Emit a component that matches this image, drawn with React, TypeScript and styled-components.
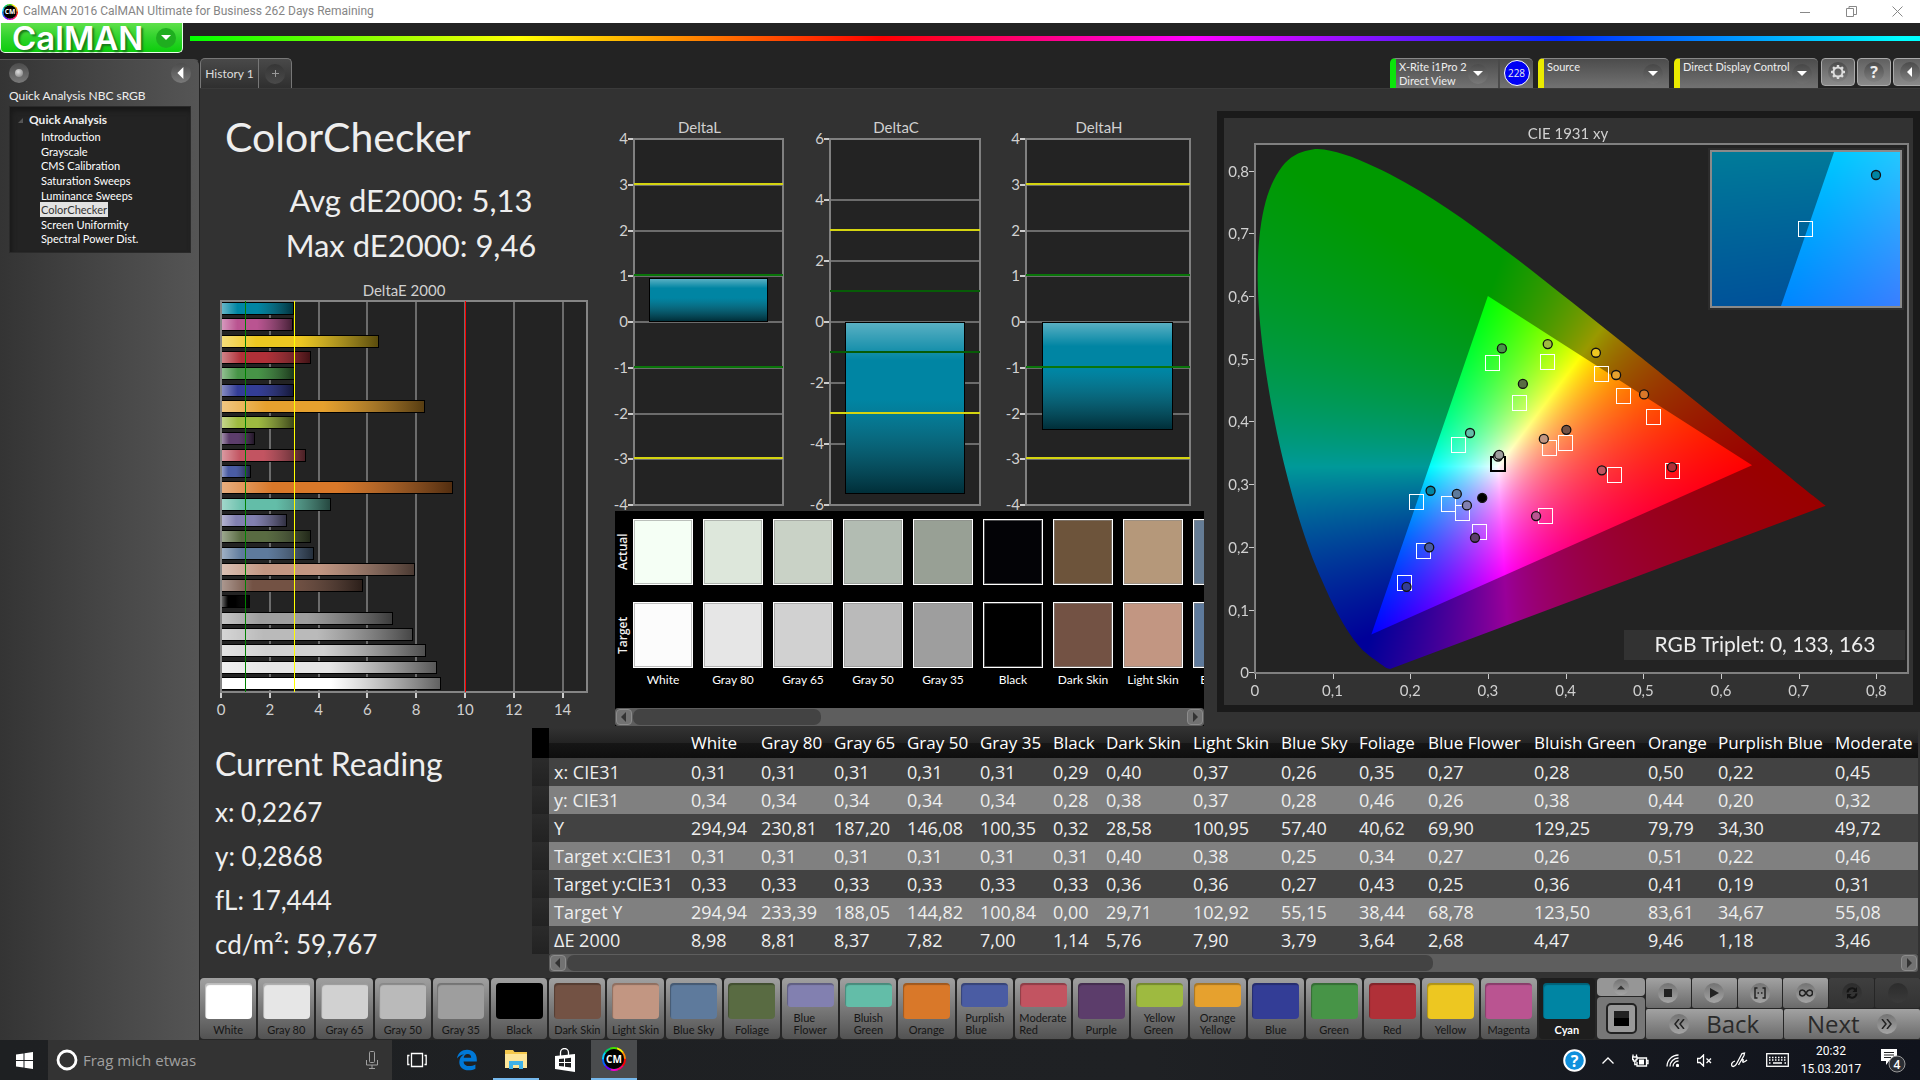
import React, { useEffect, useRef } from "react";
import styled, { createGlobalStyle } from "styled-components";

const humanist = `Lato, "Open Sans", sans-serif`;
const segoe = `"Open Sans", "Noto Sans", sans-serif`;
const compact = `Roboto, "Open Sans", sans-serif`;

const GlobalStyle = createGlobalStyle`
  * { box-sizing: border-box; }
  body { margin: 0; background: #232323; color: #eee; font-family: ${humanist}; overflow: hidden; }
  button, input, select { font: inherit; color: inherit; margin: 0; }
  button { padding: 0; border: 0; background: none; cursor: pointer; }
  ul { list-style: none; margin: 0; padding: 0; }
  h1, h2, h3, p { margin: 0; font-weight: 400; }
  a { color: inherit; text-decoration: none; }
`;

/* ---------- data ---------- */

type Patch = { name: string; color: string; actual?: string; de: number; lines?: [string, string] };

const patches: Patch[] = [
  { name: "White", color: "#ffffff", actual: "#f5fff5", de: 8.98 },
  { name: "Gray 80", color: "#e6e6e6", actual: "#dde7db", de: 8.81 },
  { name: "Gray 65", color: "#d1d1d1", actual: "#c9d2c6", de: 8.37 },
  { name: "Gray 50", color: "#bababa", actual: "#b2bcb2", de: 7.82 },
  { name: "Gray 35", color: "#9e9e9e", actual: "#98a095", de: 7.0 },
  { name: "Black", color: "#000000", actual: "#030306", de: 1.14 },
  { name: "Dark Skin", color: "#735244", actual: "#6d543b", de: 5.76 },
  { name: "Light Skin", color: "#c29682", actual: "#b5987a", de: 7.9 },
  { name: "Blue Sky", color: "#5e7a9c", actual: "#657c95", de: 3.79 },
  { name: "Foliage", color: "#596b42", de: 3.64 },
  { name: "Blue Flower", color: "#8280b0", de: 2.68, lines: ["Blue", "Flower"] },
  { name: "Bluish Green", color: "#63bda8", de: 4.47, lines: ["Bluish", "Green"] },
  { name: "Orange", color: "#d97829", de: 9.46 },
  { name: "Purplish Blue", color: "#4a5ca3", de: 1.18, lines: ["Purplish", "Blue"] },
  { name: "Moderate Red", color: "#c25461", de: 3.46, lines: ["Moderate", "Red"] },
  { name: "Purple", color: "#5c3d6b", de: 1.35 },
  { name: "Yellow Green", color: "#9eba40", de: 2.98, lines: ["Yellow", "Green"] },
  { name: "Orange Yellow", color: "#e6a12e", de: 8.3, lines: ["Orange", "Yellow"] },
  { name: "Blue", color: "#333d96", de: 2.95 },
  { name: "Green", color: "#479447", de: 3.0 },
  { name: "Red", color: "#b03038", de: 3.63 },
  { name: "Yellow", color: "#edc721", de: 6.45 },
  { name: "Magenta", color: "#ba5491", de: 2.9 },
  { name: "Cyan", color: "#0085a3", de: 2.94 },
];

const treeItems = ["Introduction", "Grayscale", "CMS Calibration", "Saturation Sweeps", "Luminance Sweeps", "ColorChecker", "Screen Uniformity", "Spectral Power Dist."];

const columns: [string, number][] = [
  ["White", 70], ["Gray 80", 73], ["Gray 65", 73], ["Gray 50", 73], ["Gray 35", 73], ["Black", 53],
  ["Dark Skin", 87], ["Light Skin", 88], ["Blue Sky", 78], ["Foliage", 69], ["Blue Flower", 106],
  ["Bluish Green", 114], ["Orange", 70], ["Purplish Blue", 117], ["Moderate Red", 140],
];

const tableRows: [string, string][] = [
  ["x: CIE31", "0,31 0,31 0,31 0,31 0,31 0,29 0,40 0,37 0,26 0,35 0,27 0,28 0,50 0,22 0,45"],
  ["y: CIE31", "0,34 0,34 0,34 0,34 0,34 0,28 0,38 0,37 0,28 0,46 0,26 0,38 0,44 0,20 0,32"],
  ["Y", "294,94 230,81 187,20 146,08 100,35 0,32 28,58 100,95 57,40 40,62 69,90 129,25 79,79 34,30 49,72"],
  ["Target x:CIE31", "0,31 0,31 0,31 0,31 0,31 0,31 0,40 0,38 0,25 0,34 0,27 0,26 0,51 0,22 0,46"],
  ["Target y:CIE31", "0,33 0,33 0,33 0,33 0,33 0,33 0,36 0,36 0,27 0,43 0,25 0,36 0,41 0,19 0,31"],
  ["Target Y", "294,94 233,39 188,05 144,82 100,84 0,00 29,71 102,92 55,15 38,44 68,78 123,50 83,61 34,67 55,08"],
  ["ΔE 2000", "8,98 8,81 8,37 7,82 7,00 1,14 5,76 7,90 3,79 3,64 2,68 4,47 9,46 1,18 3,46"],
];

/* ---------- shell ---------- */

const Window = styled.div`
  min-height: 100vh;
  display: flex;
  flex-direction: column;
  background: #232323;
`;

const TitleBar = styled.div`
  height: 23px;
  background: #fff;
  color: #858585;
  display: flex;
  align-items: center;
  gap: 5px;
  padding-left: 2px;
  font: 12px/23px ${compact};
  flex: none;
`;

const WindowButtons = styled.div`
  margin-left: auto;
  display: flex;
  button { width: 46px; height: 22px; display: grid; place-items: center; }
`;

const BrandRow = styled.header`
  display: flex;
  height: 35px;
  flex: none;
`;

const Brand = styled.button`
  width: 183px;
  height: 30px;
  border: 1px solid #e8ffe8;
  border-top: 0;
  border-radius: 0 0 5px 5px;
  background: linear-gradient(#5fe04a, #2fd32b 50%, #0ccd0c);
  display: flex;
  align-items: center;
  justify-content: space-between;
  padding: 0 6px 0 11px;
  font: 600 33px/28px Inter, ${segoe};
  color: #fff;
  text-shadow: 2px 2px 2px #1a7a1a;
`;

const BrandCaret = styled.span`
  width: 20px;
  height: 20px;
  border-radius: 50%;
  background: #1fae1f;
  display: grid;
  place-items: center;
`;

const Rainbow = styled.div`
  flex: 1;
  height: 5px;
  margin: 13px 0 0 7px;
  background: linear-gradient(90deg, #0f0, #ff0 19%, #f00 40%, #f0f 58%, #0026ff 79%, #0ff 99%);
`;

const Body = styled.div`
  flex: 1;
  display: grid;
  grid-template-columns: 200px minmax(0, 1fr);
`;

const Side = styled.aside`
  margin-top: 1px;
  background: linear-gradient(90deg, #343434, #454545 50%, #555);
  border-top: 1px solid #555;
  border-radius: 0 6px 0 0;
  border-right: 1px solid #232323;
  padding: 3px 8px 0 9px;
`;

const SideTop = styled.div`
  display: flex;
  justify-content: space-between;
`;

const Knob = styled.button<{ $dark?: boolean }>`
  width: 20px;
  height: 20px;
  border-radius: 50%;
  display: grid;
  place-items: center;
  flex: none;
  background: ${(p) => (p.$dark ? "linear-gradient(#363636, #4a4a4a)" : "linear-gradient(#4c4c4c, #797979)")};
`;

const Ball = styled.i`
  width: 8px;
  height: 8px;
  border-radius: 50%;
  background: radial-gradient(circle at 40% 35%, #ddd, #777);
`;

const SideTitle = styled.h2`
  font-size: 12px;
  line-height: 16px;
  padding-top: 5px;
  margin-bottom: 2px;
  white-space: nowrap;
`;

const Tree = styled.nav`
  background: #232323;
  border: 1px solid #2a2a2a;
  box-shadow: inset 2px 4px 5px #191919;
  height: 147px;
  padding: 4px 8px;
`;

const TreeHead = styled.div`
  display: flex;
  align-items: center;
  gap: 6px;
  font: 700 12px/18px ${humanist};
`;

const TreeList = styled.ul`
  display: grid;
  height: 117px;
  grid-template-rows: repeat(8, minmax(0, 1fr));
  padding-left: 22px;
  font-size: 11px;
`;

const TreeLink = styled.a<{ $on: boolean }>`
  display: flex;
  align-items: center;
  width: fit-content;
  height: 15px;
  padding: 0 1px;
  background: ${(p) => (p.$on ? "#e2e2e2" : "none")};
  color: ${(p) => (p.$on ? "#333" : "#fff")};
`;

const Work = styled.section`
  display: flex;
  flex-direction: column;
  min-width: 0;
`;

/* ---------- tab row ---------- */

const Tabs = styled.div`
  height: 30px;
  display: flex;
  align-items: stretch;
  overflow: hidden;
  flex: none;
`;

const TabGroup = styled.div`
  display: flex;
  border: 1px solid #777;
  border-bottom: 0;
  border-radius: 5px 5px 0 0;
  background: linear-gradient(#494949, #2f2f2f);
`;

const Tab = styled.button`
  width: 58px;
  border-right: 1px solid #777;
  font-size: 12px;
  color: #ddd;
`;

const AddTab = styled.button`
  width: 32px;
  display: grid;
  place-items: center;
`;

const Devices = styled.div`
  margin-left: auto;
  margin-right: -7px;
  display: flex;
  gap: 5px;
  flex: none;
`;

const Device = styled.div<{ $accent: string; $w: number }>`
  position: relative;
  width: ${(p) => p.$w}px;
  display: flex;
  border-radius: 5px 5px 0 0;
  border-top: 1px solid #888;
  border-left: 6px solid ${(p) => p.$accent};
  background: linear-gradient(#4c4c4c, #727272);
  font-size: 11px;
  line-height: 14px;
`;

const MeterButton = styled.button`
  width: 104px;
  border-right: 2px solid #4a4a4a;
  display: flex;
  align-items: center;
  justify-content: space-between;
  padding: 0 10px 0 3px;
  text-align: left;
  white-space: nowrap;
`;

const Count = styled.span`
  width: 26px;
  height: 26px;
  margin: 1px auto 0;
  border-radius: 50%;
  border: 1px solid #fff;
  background: #0000f5;
  display: grid;
  place-items: center;
  font: 10px/10px ${segoe};
`;

const DeviceSelect = styled.select`
  appearance: none;
  width: 100%;
  height: 28px;
  border: 0;
  background: none;
  padding: 1px 26px 13px 3px;
  font-size: 11px;
  line-height: 14px;
`;

const SelectCaret = styled.span`
  position: absolute;
  right: 6px;
  top: 5px;
  width: 20px;
  height: 20px;
  border-radius: 50%;
  background: linear-gradient(#474747, #707070);
  display: grid;
  place-items: center;
  pointer-events: none;
`;

const Tools = styled.div`
  display: flex;
  gap: 2px;
  margin-left: -2px;
`;

const Tool = styled.button`
  width: 34px;
  height: 28px;
  border: 1px solid #aaa;
  border-radius: 4px;
  background: linear-gradient(#606060, #8b8b8b);
  display: grid;
  place-items: center;
`;

const ToolFace = styled.span`
  width: 20px;
  height: 20px;
  border-radius: 50%;
  background: linear-gradient(#4b4b4b, #808080);
  display: grid;
  place-items: center;
  font: 700 16px/18px ${segoe};
`;

/* ---------- dashboard ---------- */

const Stage = styled.main`
  flex: 1;
  background: #323232;
  border-top: 1px solid #3a3a3a;
  display: flex;
  flex-direction: column;
`;

const Upper = styled.div`
  display: grid;
  grid-template-columns: 390fr 620fr 710fr;
  height: 639px;
`;

const Summary = styled.div`
  display: flex;
  flex-direction: column;
  min-width: 0;
`;

const Heading = styled.h1`
  padding: 20px 0 0 25px;
  font-size: 41px;
  line-height: 56px;
  color: #eee;
`;

const Averages = styled.div`
  padding: 13px 0 8px 32px;
  text-align: center;
  font-size: 31px;
  line-height: 45px;
`;

const Chart = styled.svg`
  display: block;
  width: 100%;
  height: auto;
  overflow: visible;
  font-family: ${humanist};
  font-size: 15px;
  fill: #d0d0d0;
  path, rect { shape-rendering: crispEdges; }
`;

const Center = styled.div`
  min-width: 0;
`;

const Compare = styled.div`
  margin: 0 6px 0 25px;
  background: #000;
`;

const CompareView = styled.div`
  display: grid;
  grid-template-columns: 18px minmax(0, 1fr);
  height: 197px;
  padding-top: 8px;
  overflow: hidden;
`;

const RowNames = styled.div`
  display: grid;
  grid-template-rows: 66px 66px;
  row-gap: 17px;
  align-content: start;
  font: 600 12px/16px ${segoe};
  span { writing-mode: vertical-rl; transform: rotate(180deg); text-align: center; }
`;

const CompareStrip = styled.div`
  display: flex;
  gap: 10px;
  overflow: hidden;
`;

const Pair = styled.figure`
  margin: 0;
  width: 60px;
  flex: none;
  display: grid;
  grid-template-rows: 66px 66px 24px;
  row-gap: 17px;
  figcaption { margin-top: -13px; text-align: center; font-size: 12px; line-height: 16px; white-space: nowrap; color: #fff; }
`;

const Swatch = styled.span<{ $c: string }>`
  background: ${(p) => p.$c};
  border: 1px solid #fff;
  box-shadow: inset 0 0 0 1px #8888;
`;

const ScrollBar = styled.div`
  height: 18px;
  display: grid;
  grid-template-columns: 18px minmax(0, 1fr) 18px;
  background: #5e5e5e;
  border-radius: 3px;
`;

const ScrollArrow = styled.button`
  margin: 1px;
  border: 1px solid #8c8c8c;
  border-radius: 4px;
  background: #727272;
  display: grid;
  place-items: center;
`;

const Thumb = styled.div<{ $share: number }>`
  width: ${(p) => p.$share}%;
  margin: 1px 0;
  border-radius: 7px;
  background: #434343;
`;

const CiePanel = styled.div`
  margin: 22px 0 0 7px;
  border: 7px solid #1a1a1a;
  align-self: start;
  background: #323232;
`;

const CieStack = styled.div`
  position: relative;
  canvas { display: block; width: 100%; height: auto; }
  svg { position: absolute; inset: 0; height: 100%; }
`;

/* ---------- readings and table ---------- */

const Lower = styled.div`
  display: grid;
  grid-template-columns: 332px minmax(0, 1fr);
  height: 250px;
`;

const Reading = styled.div`
  padding: 12px 0 0 15px;
  white-space: nowrap;
  h2 { font-size: 32px; line-height: 48px; margin-bottom: 2px; }
  p { font-size: 26px; line-height: 44px; }
`;

const TableArea = styled.div`
  margin-right: 2px;
  min-width: 0;
`;

const TableClip = styled.div`
  overflow: hidden;
`;

const Table = styled.table`
  width: 1438px;
  table-layout: fixed;
  border-collapse: collapse;
  font: 18px/28px ${segoe};
  white-space: nowrap;
  th, td { padding: 0 0 0 5px; text-align: left; font-weight: 400; height: 28px; }
  thead th { height: 30px; font-size: 17px; color: #fff; background: linear-gradient(#323232, #232323 50%, #161616 50%, #0e0e0e); }
  thead th:first-child { background: #000; }
  tbody tr { background: #424242; }
  tbody tr:nth-child(even) { background: #808080; }
  tbody td:first-child { background: linear-gradient(#2b2b2b, #222); }
`;

const TableScroll = styled.div`
  margin-left: 17px;
`;

/* ---------- patch strip ---------- */

const Strip = styled.div`
  display: grid;
  grid-template-columns: minmax(0, 1fr) 325px;
  height: 62px;
  background: #262626;
  padding-bottom: 1px;
`;

const PatchRow = styled.div`
  display: grid;
  grid-template-columns: repeat(24, minmax(0, 1fr));
  gap: 2px;
`;

const PatchButton = styled.button<{ $on: boolean }>`
  display: flex;
  flex-direction: column;
  align-items: center;
  justify-content: space-between;
  padding: 5px 0 3px;
  border-radius: 4px;
  background: ${(p) => (p.$on ? "#1e1e1e" : "linear-gradient(#a0a0a0, #525252)")};
  color: ${(p) => (p.$on ? "#fff" : "#161616")};
  font: ${(p) => (p.$on ? 700 : 400)} 11px/12px ${humanist};
  text-align: left;
  white-space: nowrap;
`;

const Chip = styled.span<{ $c: string; $short: boolean }>`
  width: 47px;
  height: ${(p) => (p.$short ? 24 : 36)}px;
  border-radius: 4px;
  background: ${(p) => p.$c};
  box-shadow: inset 1px 2px 1px #0004;
`;

const Controls = styled.div`
  display: grid;
  grid-template-columns: 48px minmax(0, 1fr);
  gap: 1px;
  padding-left: 2px;
`;

const silver = "linear-gradient(#a2a2a2, #6a6a6a)";

const Stopper = styled.div`
  display: grid;
  grid-template-rows: 18px 1fr;
  gap: 1px;
  button { background: #777; border-radius: 4px; display: grid; place-items: center; }
  button:first-child { background: #969696; }
`;

const StopFace = styled.span`
  width: 31px;
  height: 31px;
  border: 2px solid #222;
  border-radius: 5px;
  background: #999;
  display: grid;
  place-items: center;
  i { width: 15px; height: 15px; background: linear-gradient(#222 50%, #000 50%); }
`;

const Transport = styled.div`
  display: grid;
  grid-template-rows: 30px 30px;
  gap: 1px;
`;

const TransportRow = styled.div<{ $n: number }>`
  display: grid;
  grid-template-columns: repeat(${(p) => p.$n}, 1fr);
  gap: 1px;
`;

const TransportButton = styled.button<{ $off?: boolean }>`
  display: flex;
  align-items: center;
  justify-content: center;
  gap: 17px;
  border-radius: 2px;
  background: ${(p) => (p.$off ? "linear-gradient(#3f3f3f, #333)" : silver)};
  color: #2a2a2a;
  font: 24px/28px ${segoe};
`;

const Dimple = styled.span<{ $off?: boolean }>`
  width: 20px;
  height: 20px;
  border-radius: 50%;
  display: grid;
  place-items: center;
  background: ${(p) => (p.$off ? "linear-gradient(#2c2c2c, #3a3a3a)" : "linear-gradient(#737373, #a5a5a5)")};
`;

const SmallDimple = styled(Dimple)`
  width: 16px;
  height: 16px;
`;

/* ---------- task bar ---------- */

const TaskBar = styled.footer`
  height: 40px;
  flex: none;
  display: flex;
  background: linear-gradient(90deg, #1e2022, #1f2124 60%, #10131c);
`;

const TaskButton = styled.button<{ $w: number; $open?: boolean; $on?: boolean }>`
  width: ${(p) => p.$w}px;
  display: grid;
  place-items: center;
  background: ${(p) => (p.$on ? "#4a4c4e" : "none")};
  border-bottom: ${(p) => (p.$open ? "2px solid #76b9ed" : "0")};
`;

const Search = styled.label`
  width: 344px;
  background: #333;
  display: flex;
  align-items: center;
  gap: 5px;
  padding: 0 14px 0 8px;
  input { flex: 1; min-width: 0; border: 0; padding: 0; background: none; font: 15px/20px ${segoe}; outline: 0; }
  input::placeholder { color: #a0a0a0; opacity: 1; }
`;

const Tray = styled.div`
  margin-left: auto;
  display: flex;
  align-items: stretch;
`;

const Clock = styled.time`
  width: 70px;
  text-align: center;
  font: 12px/18px ${compact};
  padding-top: 2px;
  color: #fff;
`;

/* ---------- small drawings ---------- */

const Caret = ({ dir = "down", color = "#fff", w = 10 }: { dir?: "down" | "up" | "left" | "right"; color?: string; w?: number }) => {
  const d = { down: "M0 2h10L5 7z", up: "M0 8h10L5 3z", left: "M7 0v10L2 5z", right: "M3 0v10l5-5z" }[dir];
  return <svg width={w} height={w} viewBox="0 0 10 10" aria-hidden="true"><path d={d} fill={color} /></svg>;
};

const CmBadge = ({ size }: { size: number }) => (
  <svg width={size} height={size} viewBox="0 0 24 24" role="img" aria-label="CalMAN">
    {["#f00", "#f80", "#fe0", "#4d0", "#0c6", "#0cf", "#06f", "#60f", "#e0c", "#f06"].reverse().map((c, i) => {
      const a = (i * Math.PI) / 5 + 0.6;
      const b = a + Math.PI / 5 + 0.05;
      return <path key={c} stroke={c} strokeWidth="2" fill="none" d={`M${12 + 11 * Math.cos(a)} ${12 + 11 * Math.sin(a)}A11 11 0 0 1 ${12 + 11 * Math.cos(b)} ${12 + 11 * Math.sin(b)}`} />;
    })}
    <circle cx="12" cy="12" r="10" fill="#000" />
    <text x="12" y="15.500" textAnchor="middle" fontSize="10" fontWeight="700" fontFamily="Open Sans" fill="#fff">CM</text>
  </svg>
);

const Gear = () => (
  <svg width="16" height="16" viewBox="0 0 16 16" fill="none" stroke="#ddd" aria-hidden="true">
    <circle cx="8" cy="8" r="4.500" strokeWidth="2" />
    {[0, 45, 90, 135, 180, 225, 270, 315].map((a) => <path key={a} d="M8 1v2.500" strokeWidth="2.400" transform={`rotate(${a} 8 8)`} />)}
  </svg>
);

/* ---------- charts ---------- */

const DeltaEChart = () => {
  const left = 221;
  const unit = 24.4;
  const bars = [...patches].reverse();
  return (
    <Chart viewBox="200 276 390 450" role="img" aria-label="DeltaE 2000">
      <defs>
        <linearGradient id="gloss">
          <stop offset="0" stopColor="#fff" stopOpacity=".4" />
          <stop offset=".22" stopColor="#fff" stopOpacity="0" />
          <stop offset=".5" stopColor="#333" stopOpacity="0" />
          <stop offset="1" stopColor="#000" stopOpacity=".62" />
        </linearGradient>
      </defs>
      <text x="404" y="296" textAnchor="middle">DeltaE 2000</text>
      <rect x={left} y="301" width="366" height="391" fill="#232323" />
      {[0, 2, 4, 6, 8, 10, 12, 14].map((v) => (
        <g key={v}>
          <path d={`M${Math.round(left + v * unit)} 301V692`} stroke="#6c6c6c" strokeWidth="2" />
          <path d={`M${Math.round(left + v * unit)} 693v5`} stroke="#ccc" strokeWidth="2" />
          <text x={left + v * unit} y="715" textAnchor="middle">{v}</text>
        </g>
      ))}
      <rect x={left} y="301" width="366" height="391" fill="none" stroke="#858585" strokeWidth="2" />
      {bars.map((b, i) => {
        const y = Math.round(303 + i * 16.3);
        const w = Math.round(b.de * unit);
        return (
          <g key={b.name}>
            <rect x={left + 1} y={y - 1} width={w} height="13" fill="#000" />
            <rect x={left + 1} y={y} width={w - 1} height="11" fill={b.color} />
            <rect x={left + 1} y={y} width={w - 1} height="11" fill="url(#gloss)" />
          </g>
        );
      })}
      <path d="M245.500 301V692" stroke="#008000" />
      <path d="M294.500 301V692" stroke="#ff0" />
      <path d="M465.500 301V692" stroke="#f00" />
    </Chart>
  );
};

type DeltaProps = { title: string; x: number; w: number; max: number; step: number; value: number };

const DeltaPlot = ({ title, x, w, max, step, value }: DeltaProps) => {
  const y = (v: number) => Math.round(322 - (v * 183) / max);
  const ticks: number[] = [];
  for (let v = max; v >= -max; v -= step) ticks.push(v);
  const top = Math.min(y(0), y(value));
  const h = Math.abs(y(0) - y(value));
  const bx = Math.round(x + w * 0.1);
  const bw = Math.round(w * 0.8);
  return (
    <g>
      <text x={x + w / 2 - 9} y="133" textAnchor="middle">{title}</text>
      <rect x={x} y="139" width={w} height="366" fill="#232323" />
      {ticks.map((v) => (
        <g key={v}>
          <path d={`M${x} ${y(v)}h${w}`} stroke="#6c6c6c" strokeWidth="2" />
          <path d={`M${x - 6} ${y(v)}h5`} stroke="#ccc" strokeWidth="2" />
          <text x={x - 6} y={y(v) + 5} textAnchor="end">{v}</text>
        </g>
      ))}
      <rect x={x} y="139" width={w} height="366" fill="none" stroke="#808080" strokeWidth="2" />
      <rect x={bx} y={top} width={bw} height={h} fill="#000" />
      <rect x={bx + 1} y={top + 1} width={bw - 2} height={h - 2} fill="#0085a3" />
      <rect x={bx + 1} y={top + 1} width={bw - 2} height={h - 2} fill="url(#glossDown)" />
      {[1, -1].map((v) => <path key={v} d={`M${x} ${y(v) - 1}h${w}`} stroke={max === 4 ? "#0a750a" : "#075c07"} strokeWidth="2" />)}
      {[3, -3].map((v) => <path key={v} d={`M${x} ${y(v) - 1}h${w}`} stroke="#d4d410" strokeWidth="2" />)}
    </g>
  );
};

const DeltaCharts = () => (
  <Chart viewBox="590 89 620 422" role="img" aria-label="DeltaL, DeltaC and DeltaH">
    <defs>
      <linearGradient id="glossDown" x1="0" y1="0" x2="0" y2="1">
        <stop offset="0" stopColor="#fff" stopOpacity=".35" />
        <stop offset=".22" stopColor="#fff" stopOpacity="0" />
        <stop offset=".45" stopColor="#333" stopOpacity="0" />
        <stop offset="1" stopColor="#000" stopOpacity=".65" />
      </linearGradient>
    </defs>
    <DeltaPlot title="DeltaL" x={634} w={149} max={4} step={1} value={0.96} />
    <DeltaPlot title="DeltaC" x={830} w={150} max={6} step={2} value={-5.63} />
    <DeltaPlot title="DeltaH" x={1026} w={164} max={4} step={1} value={-2.36} />
  </Chart>
);

/* CIE diagram: origin and scale of the plot inside the panel */
const OX = 1254.8, OY = 672.2, SX = 777, SY = 627;
const px = (x: number) => OX + x * SX;
const py = (y: number) => OY - y * SY;

const locus = [
  [0.1741, 0.005], [0.1689, 0.0069], [0.1644, 0.0109], [0.1566, 0.0177], [0.144, 0.0297], [0.1355, 0.0399], [0.1241, 0.0578],
  [0.1096, 0.0868], [0.0913, 0.1327], [0.0687, 0.2007], [0.0454, 0.295], [0.0235, 0.4127], [0.0082, 0.5384], [0.0039, 0.6548],
  [0.0139, 0.7502], [0.0389, 0.812], [0.0743, 0.8338], [0.1142, 0.8262], [0.1547, 0.8059], [0.1929, 0.7816], [0.2296, 0.7543],
  [0.2658, 0.7243], [0.3016, 0.6923], [0.3373, 0.6589], [0.3731, 0.6245], [0.4087, 0.5896], [0.4441, 0.5547], [0.4788, 0.5202],
  [0.5125, 0.4866], [0.5752, 0.4242], [0.627, 0.3725], [0.6658, 0.334], [0.6915, 0.3083], [0.719, 0.2809], [0.7347, 0.2653],
];

const gamut = [[0.3, 0.6], [0.64, 0.33], [0.15, 0.06]];

const chroma = (x: number, yy: number) => {
  const y = Math.max(yy, 0.002);
  const X = x / y, Z = (1 - x - y) / y;
  const c = [3.2406 * X - 1.5372 - 0.4986 * Z, -0.9689 * X + 1.8758 + 0.0415 * Z, 0.0557 * X - 0.204 + 1.057 * Z].map((v) => Math.max(v, 0));
  const m = Math.max(...c) || 1;
  return c.map((v) => (v / m) * 255);
};

const field = (w: number, h: number, toXY: (i: number, j: number) => [number, number], gain: number) => {
  const layer = document.createElement("canvas");
  layer.width = w;
  layer.height = h;
  const g = layer.getContext("2d")!;
  const img = g.createImageData(w, h);
  for (let j = 0; j < h; j++)
    for (let i = 0; i < w; i++) {
      const [x, y] = toXY(i, j);
      const c = chroma(x, y);
      const o = (j * w + i) * 4;
      img.data[o] = c[0] * gain;
      img.data[o + 1] = c[1] * gain;
      img.data[o + 2] = c[2] * gain;
      img.data[o + 3] = 255;
    }
  g.putImageData(img, 0, 0);
  return layer;
};

const VX = 1224, VY = 118, VW = 689, VH = 587;
const ZOOM = 4.69, ZX = 0.207, ZY = 0.271;
const IX = 1711, IY = 151, IW = 190, IH = 156;

const targets: [number, number][] = [
  [0.305, 0.493], [0.376, 0.495], [0.446, 0.476], [0.4735, 0.441], [0.513, 0.407], [0.34, 0.429], [0.262, 0.3625], [0.379, 0.3575],
  [0.3995, 0.3657], [0.4624, 0.3153], [0.5364, 0.3203], [0.208, 0.271], [0.249, 0.2686], [0.267, 0.254], [0.374, 0.249],
  [0.289, 0.2238], [0.217, 0.193], [0.192, 0.143],
];

const readings: [number, number, string][] = [
  [0.318, 0.5164, "#479447"], [0.377, 0.5233, "#9eba40"], [0.439, 0.5095, "#edc721"], [0.465, 0.474, "#e6a12e"], [0.501, 0.443, "#d97829"],
  [0.345, 0.4597, "#596b42"], [0.277, 0.3815, "#63bda8"], [0.372, 0.372, "#c29682"], [0.401, 0.3865, "#735244"], [0.4466, 0.322, "#c25461"],
  [0.537, 0.327, "#b03038"], [0.313, 0.344, "#d1d1d1"], [0.3145, 0.3465, "#9e9e9e"], [0.2262, 0.2894, "#0085a3"], [0.26, 0.2844, "#5e7a9c"],
  [0.273, 0.266, "#8280b0"], [0.2927, 0.278, "#000"], [0.362, 0.249, "#ba5491"], [0.2834, 0.2144, "#5c3d6b"], [0.2245, 0.1992, "#4a5ca3"],
  [0.1953, 0.1362, "#333d96"],
];

const CieDiagram = () => {
  const ref = useRef<HTMLCanvasElement>(null);
  useEffect(() => {
    const g = ref.current!.getContext("2d")!;
    g.fillStyle = "#323232";
    g.fillRect(0, 0, VW, VH);
    g.fillStyle = "#232323";
    g.fillRect(1255 - VX, 144 - VY, 653, 528);
    const xy = (i: number, j: number): [number, number] => [(i + VX - OX) / SX, (OY - j - VY) / SY];
    const pts = locus.map(([x, y]) => [px(x) - VX, py(y) - VY]);
    g.save();
    g.beginPath();
    g.moveTo(pts[0][0], pts[0][1]);
    for (let i = 0; i < pts.length - 1; i++) {
      const a = pts[Math.max(i - 1, 0)], b = pts[i], c = pts[i + 1], d = pts[Math.min(i + 2, pts.length - 1)];
      g.bezierCurveTo(b[0] + (c[0] - a[0]) / 6, b[1] + (c[1] - a[1]) / 6, c[0] - (d[0] - b[0]) / 6, c[1] - (d[1] - b[1]) / 6, c[0], c[1]);
    }
    g.closePath();
    g.clip();
    g.drawImage(field(VW, VH, xy, 0.6), 0, 0);
    g.beginPath();
    gamut.forEach(([x, y]) => g.lineTo(px(x) - VX, py(y) - VY));
    g.closePath();
    g.clip();
    g.drawImage(field(VW, VH, xy, 1), 0, 0);
    g.restore();

    g.fillStyle = "#2c2c2c";
    g.fillRect(IX - VX - 3, IY - VY - 3, IW + 6, IH + 6);
    const zoomXY = (i: number, j: number): [number, number] => [ZX + (i - IW / 2) / (SX * ZOOM), ZY - (j - IH / 2) / (SY * ZOOM)];
    g.drawImage(field(IW, IH, zoomXY, 0.6), IX - VX, IY - VY);
    g.save();
    g.beginPath();
    g.rect(IX - VX, IY - VY, IW, IH);
    g.clip();
    g.beginPath();
    gamut.forEach(([x, y]) => g.lineTo(IX - VX + IW / 2 + (x - ZX - 0.0012) * SX * ZOOM, IY - VY + IH / 2 - (y - ZY) * SY * ZOOM));
    g.closePath();
    g.clip();
    g.drawImage(field(IW, IH, zoomXY, 1), IX - VX, IY - VY);
    g.restore();
  }, []);
  const label = (v: number) => (v === 0 ? "0" : `0,${v}`);
  return (
    <CieStack>
      <canvas ref={ref} width={VW} height={VH} />
      <Chart viewBox={`${VX} ${VY} ${VW} ${VH}`} role="img" aria-label="CIE 1931 xy">
        <text x="1568" y="139" textAnchor="middle">CIE 1931 xy</text>
        <rect x="1255" y="144" width="653" height="529" fill="none" stroke="#808080" strokeWidth="2" />
        {[0, 1, 2, 3, 4, 5, 6, 7, 8].map((v) => (
          <g key={v}>
            <path d={`M${Math.round(px(v / 10)) + 0.5} 674v5M1254 ${Math.round(py(v / 10)) + 0.5}h-5`} stroke="#ccc" />
            <text x={px(v / 10)} y="696" textAnchor="middle">{label(v)}</text>
            <text x="1249" y={py(v / 10) + 6} textAnchor="end">{label(v)}</text>
          </g>
        ))}
        {targets.map(([x, y]) => <rect key={`${x}-${y}`} x={Math.round(px(x)) - 6.5} y={Math.round(py(y)) - 7.5} width="14" height="15" fill="none" stroke="#fff" strokeWidth="1.500" />)}
        <rect x="1491" y="457" width="14" height="14" fill="none" stroke="#000" strokeWidth="2" />
        {readings.map(([x, y, c]) => <circle key={`${x}-${y}`} cx={px(x)} cy={py(y)} r="4.500" fill={c} stroke="#111" strokeWidth="1.300" />)}
        <rect x={IX} y={IY} width={IW} height={IH} fill="none" stroke="#8a8a8a" strokeWidth="2" />
        <rect x="1798.500" y="221.500" width="14" height="15" fill="none" stroke="#fff" strokeWidth="1.500" />
        <circle cx="1876" cy="175" r="4.500" fill="#0085a3" stroke="#111" strokeWidth="1.300" />
        <rect x="1624" y="630" width="281" height="30" fill="#323232" />
        <text x="1765" y="652" textAnchor="middle" fontSize="21" fill="#eee">RGB Triplet: 0, 133, 163</text>
      </Chart>
    </CieStack>
  );
};

const Scroller = ({ share }: { share: number }) => (
  <ScrollBar>
    <ScrollArrow aria-label="Scroll left"><Caret dir="left" color="#333" /></ScrollArrow>
    <Thumb $share={share} />
    <ScrollArrow aria-label="Scroll right"><Caret dir="right" color="#333" /></ScrollArrow>
  </ScrollBar>
);

const line = { fill: "none", stroke: "#fff", strokeWidth: 1.3 } as const;

export default function App() {
  return (
    <Window>
      <GlobalStyle />
      <TitleBar>
        <CmBadge size={16} />
        <span>CalMAN 2016 CalMAN Ultimate for Business 262 Days Remaining</span>
        <WindowButtons>
          <button aria-label="Minimize"><svg width="10" height="10"><path d="M0 5.500h10" stroke="#888" /></svg></button>
          <button aria-label="Restore"><svg width="11" height="11" fill="none" stroke="#888"><path d="M.5 2.500h7v8h-7zM3 2.500v-2h7.500v8H8" /></svg></button>
          <button aria-label="Close"><svg width="11" height="11" stroke="#888"><path d="M.5.5l10 10M10.500.5l-10 10" /></svg></button>
        </WindowButtons>
      </TitleBar>
      <BrandRow>
        <Brand>CalMAN<BrandCaret><Caret /></BrandCaret></Brand>
        <Rainbow />
      </BrandRow>
      <Body>
        <Side>
          <SideTop>
            <Knob aria-label="Workflow"><Ball /></Knob>
            <Knob aria-label="Collapse"><Caret dir="left" w={12} /></Knob>
          </SideTop>
          <SideTitle>Quick Analysis NBC sRGB</SideTitle>
          <Tree>
            <TreeHead><svg width="5" height="5"><path d="M5 0v5H0z" fill="#555" /></svg>Quick Analysis</TreeHead>
            <TreeList>
              {treeItems.map((t) => <li key={t}><TreeLink href="#" $on={t === "ColorChecker"}>{t}</TreeLink></li>)}
            </TreeList>
          </Tree>
        </Side>
        <Work>
          <Tabs>
            <TabGroup>
              <Tab>History 1</Tab>
              <AddTab aria-label="Add tab"><Knob as="span" $dark><svg width="7" height="7"><path d="M3.500 0v7M0 3.500h7" stroke="#999" /></svg></Knob></AddTab>
            </TabGroup>
            <Devices>
              <Device $accent="#0be50b" $w={143}>
                <MeterButton><span>X-Rite i1Pro 2<br />Direct View</span><Knob as="span"><Caret /></Knob></MeterButton>
                <Count>228</Count>
              </Device>
              <Device $accent="#eaea00" $w={131}>
                <DeviceSelect aria-label="Source"><option>Source</option></DeviceSelect>
                <SelectCaret><Caret /></SelectCaret>
              </Device>
              <Device $accent="#eaea00" $w={144}>
                <DeviceSelect aria-label="Display"><option>Direct Display Control</option></DeviceSelect>
                <SelectCaret><Caret /></SelectCaret>
              </Device>
              <Tools>
                <Tool aria-label="Settings"><ToolFace><Gear /></ToolFace></Tool>
                <Tool aria-label="Help"><ToolFace>?</ToolFace></Tool>
                <Tool aria-label="Hide"><ToolFace><Caret dir="left" /></ToolFace></Tool>
              </Tools>
            </Devices>
          </Tabs>
          <Stage>
            <Upper>
              <Summary>
                <Heading>ColorChecker</Heading>
                <Averages>
                  <p>Avg dE2000: 5,13</p>
                  <p>Max dE2000: 9,46</p>
                </Averages>
                <DeltaEChart />
              </Summary>
              <Center>
                <DeltaCharts />
                <Compare>
                  <CompareView>
                    <RowNames><span>Actual</span><span>Target</span></RowNames>
                    <CompareStrip>
                      {patches.slice(0, 9).map((p) => (
                        <Pair key={p.name}>
                          <Swatch $c={p.actual!} />
                          <Swatch $c={p.name === "White" ? "#fcfcfc" : p.color} />
                          <figcaption>{p.name}</figcaption>
                        </Pair>
                      ))}
                    </CompareStrip>
                  </CompareView>
                  <Scroller share={34} />
                </Compare>
              </Center>
              <CiePanel><CieDiagram /></CiePanel>
            </Upper>
            <Lower>
              <Reading>
                <h2>Current Reading</h2>
                <p>x: 0,2267</p>
                <p>y: 0,2868</p>
                <p>fL: 17,444</p>
                <p>cd/m²: 59,767</p>
              </Reading>
              <TableArea>
                <TableClip>
                  <Table>
                    <colgroup>
                      <col style={{ width: 17 }} />
                      <col style={{ width: 137 }} />
                      {columns.map(([n, w]) => <col key={n} style={{ width: w }} />)}
                    </colgroup>
                    <thead><tr><th /><th />{columns.map(([n]) => <th key={n} scope="col">{n}</th>)}</tr></thead>
                    <tbody>
                      {tableRows.map(([name, values]) => (
                        <tr key={name}><td /><th scope="row">{name}</th>{values.split(" ").map((v, i) => <td key={i}>{v}</td>)}</tr>
                      ))}
                    </tbody>
                  </Table>
                </TableClip>
                <TableScroll><Scroller share={65} /></TableScroll>
              </TableArea>
            </Lower>
          </Stage>
          <Strip>
            <PatchRow>
              {patches.map((p) => (
                <PatchButton key={p.name} $on={p.name === "Cyan"}>
                  <Chip $c={p.color} $short={!!p.lines} />
                  <span>{p.lines ? <>{p.lines[0]}<br />{p.lines[1]}</> : p.name}</span>
                </PatchButton>
              ))}
            </PatchRow>
            <Controls>
              <Stopper>
                <button aria-label="Expand"><SmallDimple><Caret dir="up" color="#333" w={8} /></SmallDimple></button>
                <button aria-label="Stop pattern"><StopFace><i /></StopFace></button>
              </Stopper>
              <Transport>
                <TransportRow $n={6}>
                  <TransportButton aria-label="Stop"><Dimple><svg width="8" height="8"><rect width="8" height="8" fill="#222" /></svg></Dimple></TransportButton>
                  <TransportButton aria-label="Play"><Dimple><svg width="9" height="10"><path d="M0 0l9 5-9 5z" fill="#222" /></svg></Dimple></TransportButton>
                  <TransportButton aria-label="Read series"><Dimple><svg width="12" height="12" fill="none" stroke="#222" strokeWidth="1.500"><path d="M3.500 1H1v10h2.500M8.500 1H11v10H8.500M3.500 6h1.500M7 6h1.500" /></svg></Dimple></TransportButton>
                  <TransportButton aria-label="Continuous"><Dimple><svg width="14" height="8" fill="none" stroke="#222" strokeWidth="1.500"><path d="M7 4C5.500 1.500 4.500 1 3.500 1a3 3 0 0 0 0 6C4.500 7 5.500 6.500 7 4S9.500 1 10.500 1a3 3 0 0 1 0 6C9.500 7 8.500 6.500 7 4z" /></svg></Dimple></TransportButton>
                  <TransportButton $off aria-label="Refresh"><Dimple $off><svg width="14" height="14" fill="none" stroke="#141414" strokeWidth="2"><path d="M2.500 6.500A4.500 4.500 0 0 1 10.500 4M11.500 7.500A4.500 4.500 0 0 1 3.500 10" /><path d="M12 1v5H7.500zM2 13V8h4.500z" fill="#141414" stroke="none" /></svg></Dimple></TransportButton>
                  <TransportButton $off aria-label="Record"><Dimple $off /></TransportButton>
                </TransportRow>
                <TransportRow $n={2}>
                  <TransportButton><Dimple><svg width="11" height="10" fill="none" stroke="#222" strokeWidth="1.500"><path d="M5 0L1 5l4 5M10 0L6 5l4 5" /></svg></Dimple>Back</TransportButton>
                  <TransportButton>Next<Dimple><svg width="11" height="10" fill="none" stroke="#222" strokeWidth="1.500"><path d="M1 0l4 5-4 5M6 0l4 5-4 5" /></svg></Dimple></TransportButton>
                </TransportRow>
              </Transport>
            </Controls>
          </Strip>
        </Work>
      </Body>
      <TaskBar>
        <TaskButton $w={48} aria-label="Start"><svg width="17" height="17" fill="#fff"><path d="M0 2.500L7.500 1.400V8H0zM8.500 1.200L17 0v8H8.500zM0 9h7.500v6.600L0 14.500zM8.500 9H17v8l-8.500-1.200z" /></svg></TaskButton>
        <Search>
          <svg width="22" height="22" aria-hidden="true"><circle cx="11" cy="11" r="9" fill="none" stroke="#fff" strokeWidth="2.800" /></svg>
          <input placeholder="Frag mich etwas" aria-label="Frag mich etwas" />
          <svg width="12" height="18" fill="none" stroke="#a0a0a0" aria-hidden="true"><rect x="3.500" y=".5" width="5" height="11" rx="1" /><path d="M.5 9v5h11V9M6 14v3.500M3 17.500h6" /></svg>
        </Search>
        <TaskButton $w={49} aria-label="Task view"><svg width="20" height="16" {...line}><path d="M4.500 1.500h11v13h-11zM2.500 3.500H.8v9h1.700M17.500 3.500h1.700v9h-1.700" /></svg></TaskButton>
        <TaskButton $w={52} aria-label="Edge">
          <svg width="22" height="22" viewBox="0 0 22 22"><path fill="#0078d7" d="M1 9.500C1.800 4 6 .8 11 .8c6 0 9.800 4 9.800 9.600v2H7.600c.2 3.300 2.700 4.700 5.600 4.700 2.300 0 4.400-.6 6.200-1.700v4.400c-2 1-4.300 1.500-6.800 1.500C6.800 21.300 3.300 18 3.300 13c0-3.300 1.800-6 4.700-7.500C5 5.600 2.600 7.200 1 9.500zm6.700-.8h7.500c0-2.400-1.200-3.800-3.600-3.800-2.200 0-3.600 1.600-3.900 3.800z" /></svg>
        </TaskButton>
        <TaskButton $w={46} $open aria-label="Explorer">
          <svg width="22" height="19"><path d="M0 0h8l1.500 2H22v16H0z" fill="#f5c94d" /><path d="M0 4h22v14H0z" fill="#fde69a" /><path d="M4 19v-8h14v8h-4v-4H8v4z" fill="#3fb2e8" /></svg>
        </TaskButton>
        <TaskButton $w={52} aria-label="Store">
          <svg width="20" height="24"><path d="M5.500 8V4.500a4 4 0 0 1 8 0V7" {...line} /><path d="M0 8l20-2v18L0 21z" fill="#fff" /><path d="M4 11l5-.5V14H4zM10 10.400l6-.6V14h-6zM4 15h5v3.600L4 18zM10 15h6v4.400l-6-.7z" fill="#1e2022" /></svg>
        </TaskButton>
        <TaskButton $w={46} $open $on aria-label="CalMAN"><CmBadge size={24} /></TaskButton>
        <Tray>
          <TaskButton $w={36} aria-label="Help"><svg width="23" height="23"><circle cx="11.500" cy="11.500" r="10.300" fill="#1090dc" stroke="#fff" strokeWidth="2" /><text x="11.500" y="17.500" textAnchor="middle" fontSize="16" fontWeight="700" fontFamily="Open Sans" fill="#fff">?</text></svg></TaskButton>
          <TaskButton $w={32} aria-label="Show hidden icons"><svg width="12" height="7" {...line}><path d="M.5 6.500L6 1l5.500 5.500" /></svg></TaskButton>
          <TaskButton $w={32} aria-label="Battery"><svg width="17" height="13" {...line}><path d="M5 4h9.500v8H5V8M14.500 6.500H16v3h-1.500M1 .5v2M4.500.5v2M.5 3h4.500v2.500h-1V7H1.500V5.500h-1zM2.800 7v3.500H5" /><path d="M7 5.500h5v5H7z" fill="#fff" stroke="none" /></svg></TaskButton>
          <TaskButton $w={32} aria-label="Network"><svg width="13" height="13" {...line}><path d="M1 12.500A11.500 11.500 0 0 1 12.500 1M4 12.500A8.500 8.500 0 0 1 12.500 4M7 12.500A5.500 5.500 0 0 1 12.500 7" /><circle cx="11.500" cy="11.500" r="1" fill="#fff" /></svg></TaskButton>
          <TaskButton $w={32} aria-label="Volume muted"><svg width="15" height="13" {...line}><path d="M.5 4.500H3l3.500-3.500v11L3 8.500H.5zM9.500 4.500l4.500 4.500M14 4.500L9.500 9" /></svg></TaskButton>
          <TaskButton $w={38} aria-label="Pen"><svg width="17" height="16" {...line}><path d="M4 9C1 10 0 12 1 14c2 1.500 4-1 5-3L11 1.500 13.500 1 13 3.500 7.500 13M10 9c1-2 3-2 2 0s1 1.500 4-1" /></svg></TaskButton>
          <TaskButton $w={38} aria-label="Keyboard"><svg width="23" height="14" {...line}><rect x=".7" y=".7" width="21.600" height="12.600" /><path d="M3 4.500h17M3 7h17" strokeDasharray="1.500 1.500" /><path d="M3 10h1.500M7 10h9M18.500 10H20" /></svg></TaskButton>
          <Clock>20:32<br />15.03.2017</Clock>
          <TaskButton $w={54} aria-label="Notifications, 4"><svg width="26" height="26"><path d="M1 2h16v12H9l-3 4v-4H1z" fill="#fff" /><path d="M4 5.500h10M4 8h10M4 10.500h7" stroke="#1e2022" /><circle cx="17" cy="17" r="8" fill="#2b2e34" stroke="#999" /><text x="17" y="21.500" textAnchor="middle" fontSize="12" fontWeight="600" fontFamily="Open Sans" fill="#fff">4</text></svg></TaskButton>
        </Tray>
      </TaskBar>
    </Window>
  );
}
